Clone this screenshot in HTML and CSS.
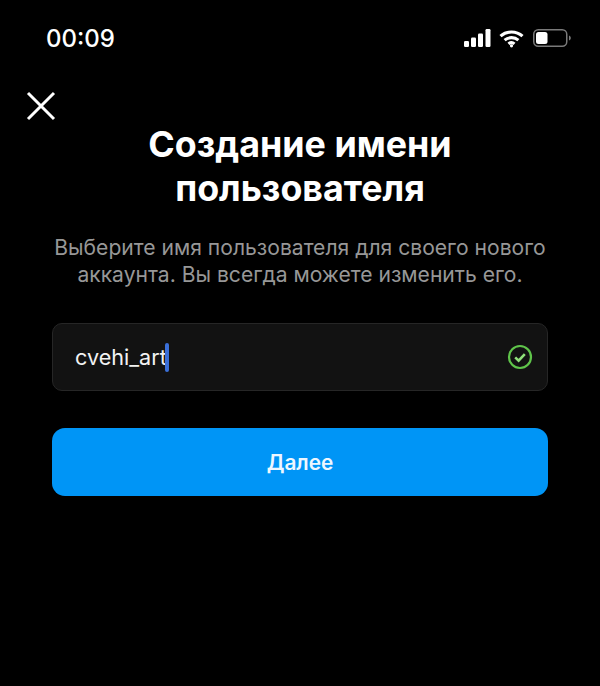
FILE: index.html
```html
<!DOCTYPE html>
<html lang="ru">
<head>
<meta charset="utf-8">
<title>Создание имени пользователя</title>
<link rel="stylesheet" href="styles.css">
</head>
<body>
<div class="screen">
  <header class="status">
    <span class="time">00:09</span>
    <div class="status-icons">
      <svg class="signal" width="27" height="18" viewBox="0 0 27 18"><rect x="0" y="12" width="5" height="6" rx="1.2"/><rect x="7" y="8.5" width="5" height="9.5" rx="1.2"/><rect x="14" y="4.5" width="5" height="13.5" rx="1.2"/><rect x="21.5" y="0" width="5" height="18" rx="1.2"/></svg>
      <svg class="wifi" width="25" height="19" viewBox="0 0 25 19"><path d="M1.5 7.2C7.6 1.6 17.4 1.6 23.5 7.2" /><path d="M5.6 11.2C9.5 7.8 15.5 7.8 19.4 11.2"/><path d="M9.5 14.9C11.2 13.5 13.8 13.5 15.5 14.9"/><circle cx="12.5" cy="16.8" r="1.6"/></svg>
      <svg class="battery" width="38" height="20" viewBox="0 0 38 20"><rect x="0.75" y="1.75" width="33" height="16.5" rx="4.5" class="battery-shell"/><rect x="3" y="4" width="11.5" height="12" rx="2.5" class="battery-level"/><path d="M36 7.5c1.2.4 1.8 1.3 1.8 2.5s-.6 2.1-1.8 2.5z" class="battery-nub"/></svg>
    </div>
  </header>
  <button class="close" aria-label="Закрыть">
    <svg width="30" height="30" viewBox="0 0 30 30"><path d="M2 2L28 28M28 2L2 28"/></svg>
  </button>
  <main class="content">
    <h1 class="title">Создание имени<br>пользователя</h1>
    <p class="subtitle">Выберите имя пользователя для своего нового<br>аккаунта. Вы всегда можете изменить его.</p>
    <div class="field">
      <span class="value">cvehi_art</span><span class="caret"></span>
      <svg class="ok" width="26" height="26" viewBox="0 0 26 26"><circle cx="13" cy="13" r="11"/><path d="M8.2 13.4L11.6 16.6L17.8 10.2"/></svg>
    </div>
    <button class="next">Далее</button>
  </main>
</div>
</body>
</html>
```
FILE: styles.css
```css
* { box-sizing: border-box; }
html, body { margin: 0; padding: 0; background: #000; }
.screen {
  width: 600px;
  height: 686px;
  background: #000;
  color: #fff;
  font-family: Inter, "Liberation Sans", sans-serif;
  overflow: hidden;
}
.status {
  height: 76px;
  padding: 0 29px 0 46px;
  display: flex;
  justify-content: space-between;
  align-items: center;
}
.time { font-size: 24px; font-weight: 500; color: #fff; }
.status-icons { display: flex; align-items: center; gap: 9px; }
.signal { fill: #fff; margin-right: -1px; }
.wifi { fill: #fff; }
.wifi path { fill: none; stroke: #fff; stroke-width: 3.1; }
.battery-shell { fill: none; stroke: #7a7a7a; stroke-width: 1.5; }
.battery-level { fill: #fff; }
.battery-nub { fill: #7a7a7a; }
.close {
  display: block;
  margin-left: 26px;
  margin-top: 15px;
  padding: 0;
  width: 30px;
  height: 30px;
  background: none;
  border: 0;
}
.close svg { display: block; }
.close path { fill: none; stroke: #fff; stroke-width: 3; }
.content { padding: 0 52px; margin-top: 1px; }
.title {
  margin: 0;
  text-align: center;
  font-size: 35.8px;
  line-height: 44px;
  font-weight: 700;
  color: #fff;
}
.subtitle {
  margin: 24px 0 0;
  text-align: center;
  font-size: 21.1px;
  line-height: 27px;
  color: #979797;
}
.field {
  margin-top: 35px;
  height: 68px;
  display: flex;
  align-items: center;
  padding: 0 14px 0 22px;
  background: #121212;
  border: 1px solid #262626;
  border-radius: 10px;
}
.value { font-size: 21.6px; color: #f2f2f2; }
.caret { width: 4px; height: 29px; background: #3a6fd8; border-radius: 2px; margin-left: -2px; }
.ok { margin-left: auto; }
.ok circle, .ok path { fill: none; stroke: #5fc44a; stroke-width: 2.2; }
.ok path { stroke: #8fe07a; stroke-width: 2.6; }
.next {
  display: block;
  width: 100%;
  height: 68px;
  margin-top: 37px;
  background: #0095f6;
  border: 0;
  border-radius: 13px;
  color: #eef7ff;
  font-family: inherit;
  font-size: 20.8px;
  font-weight: 600;
}
```
